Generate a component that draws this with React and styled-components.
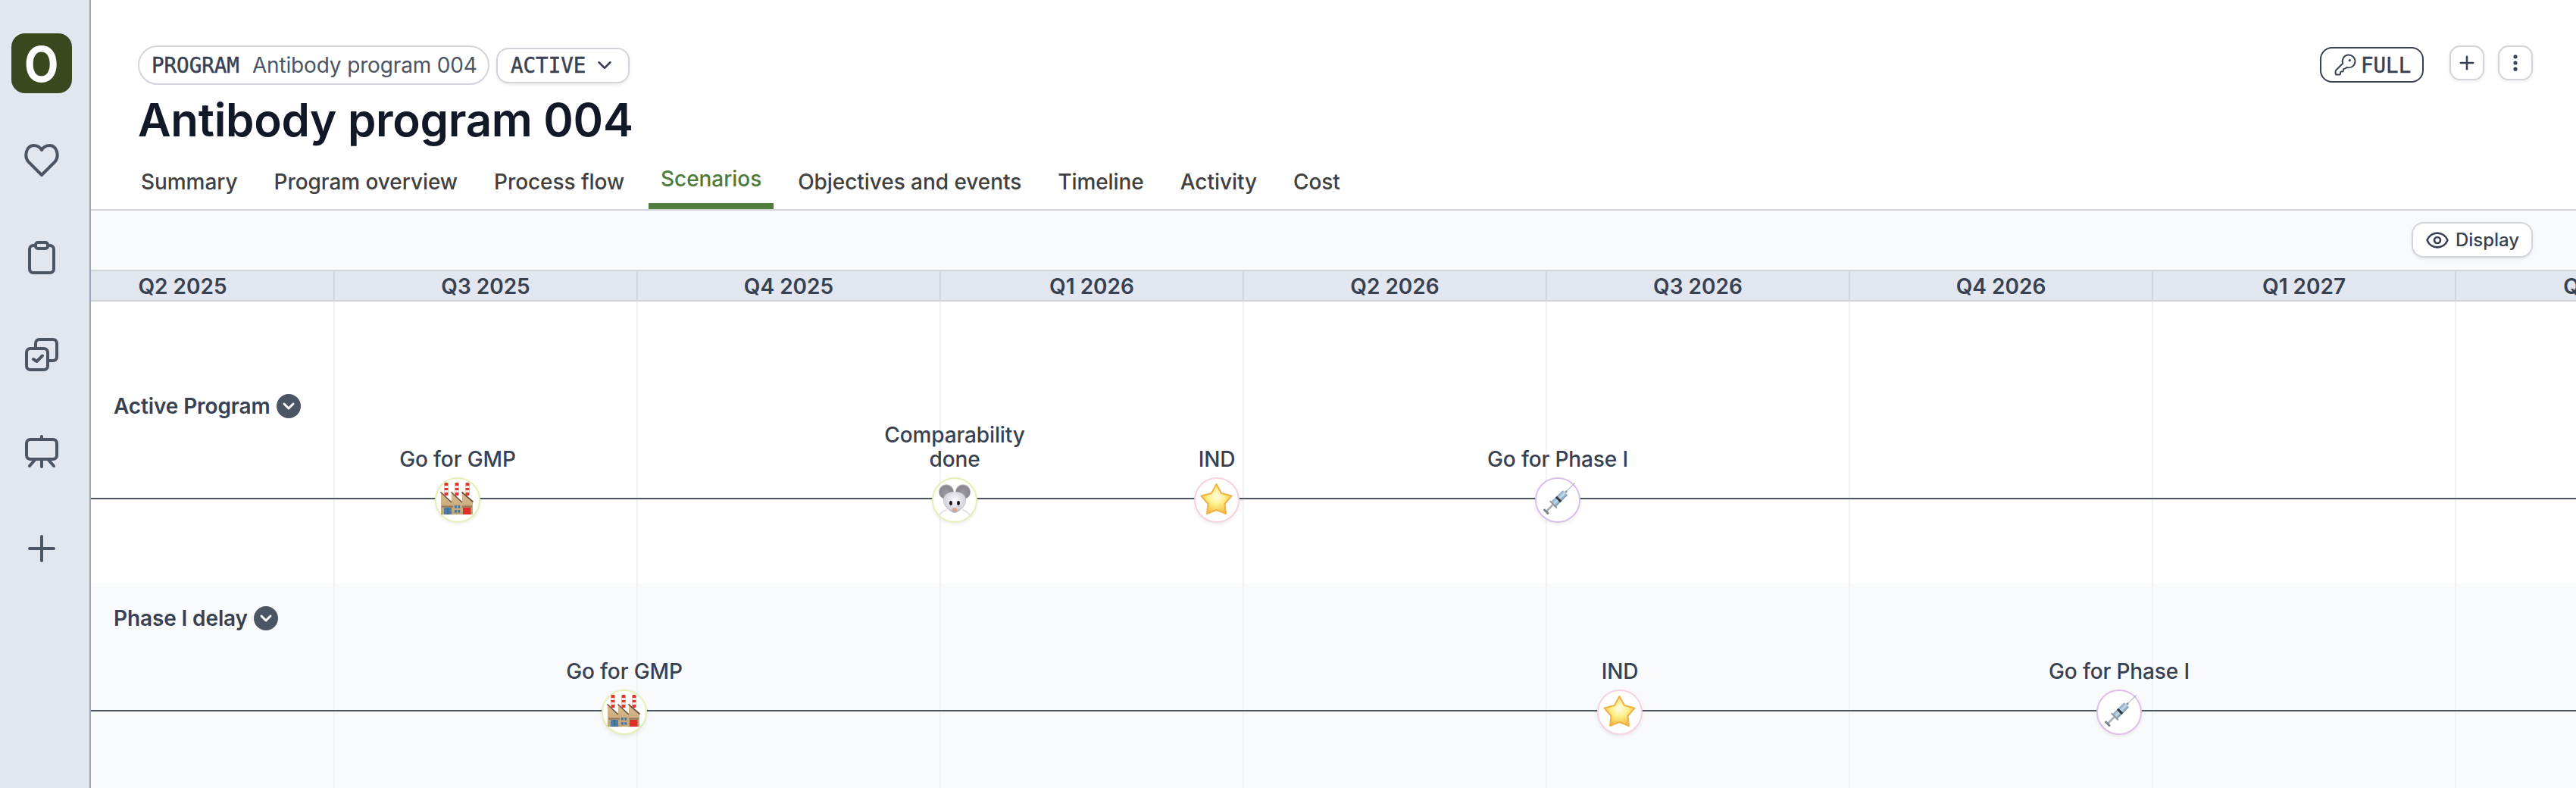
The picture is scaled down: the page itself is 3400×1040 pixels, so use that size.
import React from 'react';
import styled, { createGlobalStyle } from 'styled-components';
import { ChevronDown, Eye, KeyRound, Plus, EllipsisVertical } from 'lucide-react';

const Global = createGlobalStyle`
  html, body { margin: 0; padding: 0; background: #fff; }
  body { font-family: Inter, "Liberation Sans", sans-serif; }
  * { box-sizing: border-box; }
`;

const mono = `"DejaVu Sans Mono", "Liberation Mono", monospace`;

const Shell = styled.div`
  display: flex;
  width: 3400px;
  height: 1040px;
  overflow: hidden;
`;

const Sidebar = styled.nav`
  flex: 0 0 120px;
  height: 100%;
  background: #e2e6ef;
  border-right: 2px solid #9ca6b8;
  display: flex;
  flex-direction: column;
  align-items: center;
  padding: 44px 8px 0 0;
  color: #4b5563;
`;

const Logo = styled.div`
  width: 80px;
  height: 79px;
  border-radius: 18px;
  background: #3b471e;
  color: #fff;
  font-size: 64px;
  font-weight: 700;
  line-height: 82px;
  text-align: center;
  margin-bottom: 65px;
`;

const LogoGlyph = styled.span`
  display: inline-block;
  transform: scaleX(0.92);
`;

const NavIcon = styled.svg`
  width: 48px;
  height: 48px;
  margin-bottom: 80px;
  fill: none;
  stroke: #4b5563;
  stroke-width: 4;
  stroke-linecap: round;
  stroke-linejoin: round;
  flex: none;
`;

const Main = styled.main`
  flex: 1;
  min-width: 0;
  display: flex;
  flex-direction: column;
`;

const Header = styled.header`
  height: 278px;
  border-bottom: 2px solid #d1d5db;
  padding: 60px 57px 0 62px;
  display: flex;
  flex-direction: column;
`;

const TopRow = styled.div`
  display: flex;
  justify-content: space-between;
  height: 52px;
`;

const Left = styled.div`
  display: flex;
  align-items: center;
  gap: 9px;
`;

const Right = styled.div`
  display: flex;
  align-items: flex-start;
`;

const ProgramPill = styled.div`
  height: 52px;
  width: 464px;
  border: 2px solid #d1d5db;
  border-radius: 26px;
  display: flex;
  align-items: center;
  padding-left: 16px;
  gap: 17px;
  font-size: 28px;
  letter-spacing: -0.15px;
  color: #4b5563;
  white-space: nowrap;
`;

const Mono = styled.span`
  font-family: ${mono};
  font-size: 27.5px;
  letter-spacing: 0;
  color: #374151;
  -webkit-text-stroke: 0.5px #374151;
`;

const StatusButton = styled.div`
  height: 47px;
  width: 176px;
  border: 2px solid #d1d5db;
  border-radius: 16px;
  box-shadow: 0 2px 4px rgba(0, 0, 0, 0.08);
  display: flex;
  align-items: center;
  padding-left: 17px;
  gap: 10px;
  color: #374151;
`;

const AccessBadge = styled.div`
  width: 137px;
  height: 47px;
  margin-top: 2px;
  margin-right: 34px;
  border: 2px solid #374151;
  border-radius: 16px;
  display: flex;
  align-items: center;
  padding-left: 16px;
  gap: 5px;
  color: #374151;
`;

const IconButton = styled.div`
  width: 46px;
  height: 46px;
  border: 2px solid #d1d5db;
  border-radius: 14px;
  box-shadow: 0 2px 4px rgba(0, 0, 0, 0.08);
  display: flex;
  align-items: center;
  justify-content: center;
  color: #374151;
  margin-left: ${p => p.$gap || 0}px;
`;

const Title = styled.h1`
  margin: 10px 0 0;
  font-size: 60px;
  line-height: 72px;
  font-weight: 600;
  letter-spacing: -0.3px;
  color: #111827;
  white-space: nowrap;
`;

const Tabs = styled.div`
  display: flex;
  gap: 16px;
  margin: 10px 0 0 -12px;
  height: 72px;
`;

const Tab = styled.div`
  padding: 0 16px;
  display: flex;
  align-items: center;
  font-size: 28px;
  font-weight: 500;
  letter-spacing: -0.06px;
  white-space: nowrap;
  color: ${p => (p.$active ? '#4d7c3a' : '#404040')};
  border-bottom: ${p => (p.$active ? '8px solid #4f7d3d' : 'none')};
`;

const Toolbar = styled.div`
  height: 78px;
  flex: none;
  background: #f9fafb;
  display: flex;
  justify-content: flex-end;
  align-items: center;
  padding: 0 57px 1px 0;
`;

const DisplayButton = styled.div`
  width: 160px;
  height: 47px;
  background: #fff;
  border: 2px solid #d1d5db;
  border-radius: 16px;
  box-shadow: 0 2px 4px rgba(0, 0, 0, 0.08);
  display: flex;
  align-items: center;
  justify-content: center;
  gap: 8px;
  font-size: 24px;
  font-weight: 500;
  color: #374151;
`;

const Timeline = styled.div`
  flex: 1;
  min-height: 0;
  position: relative;
  overflow: hidden;
  display: flex;
  flex-direction: column;
`;

const Quarters = styled.div`
  flex: none;
  height: 42px;
  margin-left: -80px;
  background: #e2e6ef;
  border-top: 2px solid #d1d5db;
  border-bottom: 2px solid #d1d5db;
  display: flex;
`;

const Quarter = styled.div`
  flex: 0 0 400px;
  border-left: 2px solid #d1d5db;
  display: flex;
  align-items: center;
  justify-content: center;
  padding-top: 1px;
  font-size: 28px;
  font-weight: 600;
  color: #374151;
  white-space: nowrap;
`;

const GridLines = styled.div`
  position: absolute;
  top: 42px;
  bottom: 0;
  left: -80px;
  display: flex;
  z-index: 1;
  pointer-events: none;
`;

const GridLine = styled.div`
  flex: 0 0 400px;
  border-left: 2px solid #f1f1f5;
`;

const Row = styled.section`
  padding-top: ${p => p.$top}px;
  padding-bottom: ${p => p.$bottom || 0}px;
  background: ${p => (p.$shaded ? '#f9fafb' : '#fff')};
  flex: ${p => (p.$fill ? 1 : 'none')};
`;

const RowLabel = styled.div`
  height: 32px;
  padding-left: 30px;
  display: flex;
  align-items: center;
  gap: 8px;
  font-size: 28px;
  font-weight: 600;
  letter-spacing: -0.12px;
  color: #374151;
  white-space: nowrap;
`;

const Chevron = styled.span`
  width: 32px;
  height: 32px;
  border-radius: 50%;
  background: #4b5563;
  color: #fff;
  display: flex;
  align-items: center;
  justify-content: center;
`;

const Track = styled.div`
  position: relative;
  z-index: 2;
  margin-top: 105px;
  height: 2px;
  background: #4b5563;
`;

const Milestone = styled.div`
  position: absolute;
  top: 0;
  left: ${p => p.$x}px;
  width: 0;
`;

const MilestoneLabel = styled.div`
  position: absolute;
  bottom: 35px;
  left: -110px;
  width: 220px;
  text-align: center;
  font-size: 28px;
  line-height: 32px;
  font-weight: 500;
  letter-spacing: -0.12px;
  color: #374151;
`;

const Marker = styled.div`
  position: absolute;
  left: -30px;
  top: -27px;
  width: 60px;
  height: 60px;
  border-radius: 50%;
  background: #fff;
  border: 2px solid ${p => p.$ring};
  box-shadow: 0 2px 5px rgba(0, 0, 0, 0.08);
  display: flex;
  align-items: center;
  justify-content: center;
`;

const Art = styled.svg`
  width: 56px;
  height: 56px;
  flex: none;
`;

const Factory = () => (
  <Art viewBox="2 2 56 56">
    <defs>
      <linearGradient id="brick" x1="0" x2="0" y1="0" y2="1">
        <stop offset="0%" stopColor="#d8bb8e" />
        <stop offset="100%" stopColor="#c2a376" />
      </linearGradient>
    </defs>
    {[15, 29, 43].map(x => (
      <g key={x}>
        <rect x={x - 2.5} y="7" width="5" height="17" fill="#e3362c" rx="1.2" />
        <rect x={x - 2.5} y="11" width="5" height="3" fill="#f7efe9" />
        <rect x={x - 2.5} y="17" width="5" height="3" fill="#f7efe9" />
      </g>
    ))}
    <path d="M8 20 L22 33 V20 L36 33 V20 L50 32 V49 H8 Z" fill="url(#brick)" />
    <path d="M7.5 19.5 L22 33 M21.5 19.5 L36 33 M35.5 19.5 L50.5 32.5" stroke="#6b5240" strokeWidth="1.7" fill="none" />
    <rect x="9" y="37.5" width="15" height="2.2" fill="#95795a" />
    <rect x="36" y="37.5" width="13" height="2.2" fill="#95795a" />
    <rect x="12" y="40" width="10" height="9" fill="#4c7ea6" />
    <rect x="16.5" y="40" width="1" height="9" fill="#2d5a80" />
    <rect x="37" y="40" width="10.5" height="9" fill="#dc2f27" />
    <g fill="#4a7596">
      <rect x="26" y="37" width="2.8" height="3.6" />
      <rect x="30.3" y="37" width="2.8" height="3.6" />
      <rect x="26" y="43" width="2.8" height="3.6" />
      <rect x="30.3" y="43" width="2.8" height="3.6" />
    </g>
  </Art>
);

const Mouse = () => (
  <Art viewBox="2 2 56 56">
    <defs>
      <radialGradient id="mouseHead" cx="50%" cy="38%" r="65%">
        <stop offset="0%" stopColor="#fafafc" />
        <stop offset="70%" stopColor="#d6d4dc" />
        <stop offset="100%" stopColor="#918e99" />
      </radialGradient>
      <radialGradient id="mouseEar" cx="50%" cy="55%" r="55%">
        <stop offset="0%" stopColor="#9b98a0" />
        <stop offset="80%" stopColor="#8a878f" />
        <stop offset="100%" stopColor="#d8d6dc" />
      </radialGradient>
    </defs>
    <path d="M10 50 Q14 44 20 43 M50 50 Q46 44 40 43" stroke="#e3e3e6" strokeWidth="2" fill="none" />
    <circle cx="19" cy="19" r="10" fill="url(#mouseEar)" />
    <circle cx="41" cy="19" r="10" fill="url(#mouseEar)" />
    <path d="M30 47 C22 45 14 37 15 29 C16 22 23 19 30 19 C37 19 44 22 45 29 C46 37 38 45 30 47 Z" fill="url(#mouseHead)" />
    <ellipse cx="25" cy="34" rx="1.9" ry="3" fill="#141318" />
    <ellipse cx="35" cy="34" rx="1.9" ry="3" fill="#141318" />
    <ellipse cx="30" cy="42.5" rx="3" ry="2.2" fill="#e8a17c" />
  </Art>
);

const Star = () => (
  <Art viewBox="2 2 56 56">
    <defs>
      <radialGradient id="starFill" cx="50%" cy="42%" r="60%">
        <stop offset="0%" stopColor="#fffde8" />
        <stop offset="45%" stopColor="#fdf08a" />
        <stop offset="100%" stopColor="#f3b73c" />
      </radialGradient>
    </defs>
    <path
      d="M29.5 9 L36 21 L49.5 24.5 L40.5 35 L42 48 L29.5 43 L17 48 L18.5 35 L9.5 24.5 L23 21 Z"
      fill="url(#starFill)"
      stroke="#efb146"
      strokeWidth="2"
      strokeLinejoin="round"
    />
  </Art>
);

const Syringe = () => (
  <Art viewBox="2 2 56 56">
    <defs>
      <linearGradient id="barrel" x1="0" x2="1" y1="0" y2="0">
        <stop offset="0%" stopColor="#7fa4c2" />
        <stop offset="50%" stopColor="#c4dbe9" />
        <stop offset="100%" stopColor="#6f90ab" />
      </linearGradient>
    </defs>
    <g transform="rotate(45 30 30)">
      <rect x="29.6" y="-2" width="0.9" height="17" fill="#a9b4bd" />
      <rect x="28.6" y="13" width="2.8" height="3" fill="#8a99a6" />
      <rect x="25.5" y="16" width="9" height="21" rx="1" fill="url(#barrel)" />
      <rect x="25.5" y="27" width="9" height="3" fill="#33393f" />
      <rect x="23.5" y="37" width="13" height="2.2" rx="1" fill="#8d969d" />
      <rect x="28.6" y="39" width="2.8" height="12" fill="#aab2b8" />
      <rect x="25.5" y="50" width="9" height="3" rx="1" fill="#7d868d" />
    </g>
  </Art>
);

const quarters = ['Q2 2025', 'Q3 2025', 'Q4 2025', 'Q1 2026', 'Q2 2026', 'Q3 2026', 'Q4 2026', 'Q1 2027', 'Q2 2027'];
const tabs = ['Summary', 'Program overview', 'Process flow', 'Scenarios', 'Objectives and events', 'Timeline', 'Activity', 'Cost'];

const kinds = {
  gmp: { ring: '#e6f0b4', Icon: Factory },
  mouse: { ring: '#e6f0b4', Icon: Mouse },
  star: { ring: '#f8d2e0', Icon: Star },
  shot: { ring: '#dcc0e8', Icon: Syringe },
};

const scenarios = [
  {
    name: 'Active Program',
    top: 122,
    bottom: 111,
    items: [
      { x: 484, label: 'Go for GMP', kind: 'gmp' },
      { x: 1140, label: 'Comparability done', kind: 'mouse' },
      { x: 1486, label: 'IND', kind: 'star' },
      { x: 1936, label: 'Go for Phase I', kind: 'shot' },
    ],
  },
  {
    name: 'Phase I delay',
    top: 30,
    shaded: true,
    fill: true,
    items: [
      { x: 704, label: 'Go for GMP', kind: 'gmp' },
      { x: 2018, label: 'IND', kind: 'star' },
      { x: 2677, label: 'Go for Phase I', kind: 'shot' },
    ],
  },
];

export default function App() {
  return (
    <>
      <Global />
      <Shell>
        <Sidebar>
          <Logo><LogoGlyph>O</LogoGlyph></Logo>
          <NavIcon viewBox="0 0 48 48">
            <path d="M24 43 L6.5 25.5 C0.5 18.5 3.5 4 13.5 4 C18 4 22 6.5 24 10 C26 6.5 30 4 34.5 4 C44.5 4 47.5 18.5 41.5 25.5 Z" />
          </NavIcon>
          <NavIcon viewBox="0 0 48 48">
            <rect x="16" y="4" width="16" height="8" rx="3" />
            <path d="M16 8 H13 a5 5 0 0 0 -5 5 V39 a5 5 0 0 0 5 5 H35 a5 5 0 0 0 5 -5 V13 a5 5 0 0 0 -5 -5 H32" />
          </NavIcon>
          <NavIcon viewBox="0 0 48 48">
            <rect x="4" y="16" width="28" height="28" rx="5" />
            <path d="M16 14 V9 a5 5 0 0 1 5 -5 H39 a5 5 0 0 1 5 5 V27 a5 5 0 0 1 -5 5 H34" />
            <path d="M13 30 L17.5 33 L25 25.5" />
          </NavIcon>
          <NavIcon viewBox="0 0 48 48">
            <rect x="4" y="8" width="40" height="26" rx="5" />
            <path d="M24 4 V8 M24 34 V44 M15 35 L8 43 M33 35 L40 43" />
          </NavIcon>
          <NavIcon viewBox="0 0 48 48">
            <path d="M24 8 V40 M8 24 H40" />
          </NavIcon>
        </Sidebar>
        <Main>
          <Header>
            <TopRow>
              <Left>
                <ProgramPill>
                  <Mono>PROGRAM</Mono>
                  <span>Antibody program 004</span>
                </ProgramPill>
                <StatusButton>
                  <Mono>ACTIVE</Mono>
                  <ChevronDown size={30} strokeWidth={2} />
                </StatusButton>
              </Left>
              <Right>
                <AccessBadge>
                  <KeyRound size={31} strokeWidth={1.5} />
                  <Mono>FULL</Mono>
                </AccessBadge>
                <IconButton>
                  <Plus size={28} strokeWidth={2.2} />
                </IconButton>
                <IconButton $gap={18}>
                  <EllipsisVertical size={28} strokeWidth={2.4} />
                </IconButton>
              </Right>
            </TopRow>
            <Title>Antibody program 004</Title>
            <Tabs>
              {tabs.map(t => (
                <Tab key={t} $active={t === 'Scenarios'}>{t}</Tab>
              ))}
            </Tabs>
          </Header>
          <Toolbar>
            <DisplayButton>
              <Eye size={32} strokeWidth={2} />
              Display
            </DisplayButton>
          </Toolbar>
          <Timeline>
            <Quarters>
              {quarters.map(q => (
                <Quarter key={q}>{q}</Quarter>
              ))}
            </Quarters>
            <GridLines>
              {quarters.map(q => (
                <GridLine key={q} />
              ))}
            </GridLines>
            {scenarios.map(s => (
              <Row key={s.name} $top={s.top} $bottom={s.bottom} $shaded={s.shaded} $fill={s.fill}>
                <RowLabel>
                  {s.name}
                  <Chevron>
                    <ChevronDown size={24} strokeWidth={3} />
                  </Chevron>
                </RowLabel>
                <Track>
                  {s.items.map(m => {
                    const { ring, Icon } = kinds[m.kind];
                    return (
                      <Milestone key={m.label} $x={m.x}>
                        <MilestoneLabel>{m.label}</MilestoneLabel>
                        <Marker $ring={ring}>
                          <Icon />
                        </Marker>
                      </Milestone>
                    );
                  })}
                </Track>
              </Row>
            ))}
          </Timeline>
        </Main>
      </Shell>
    </>
  );
}
